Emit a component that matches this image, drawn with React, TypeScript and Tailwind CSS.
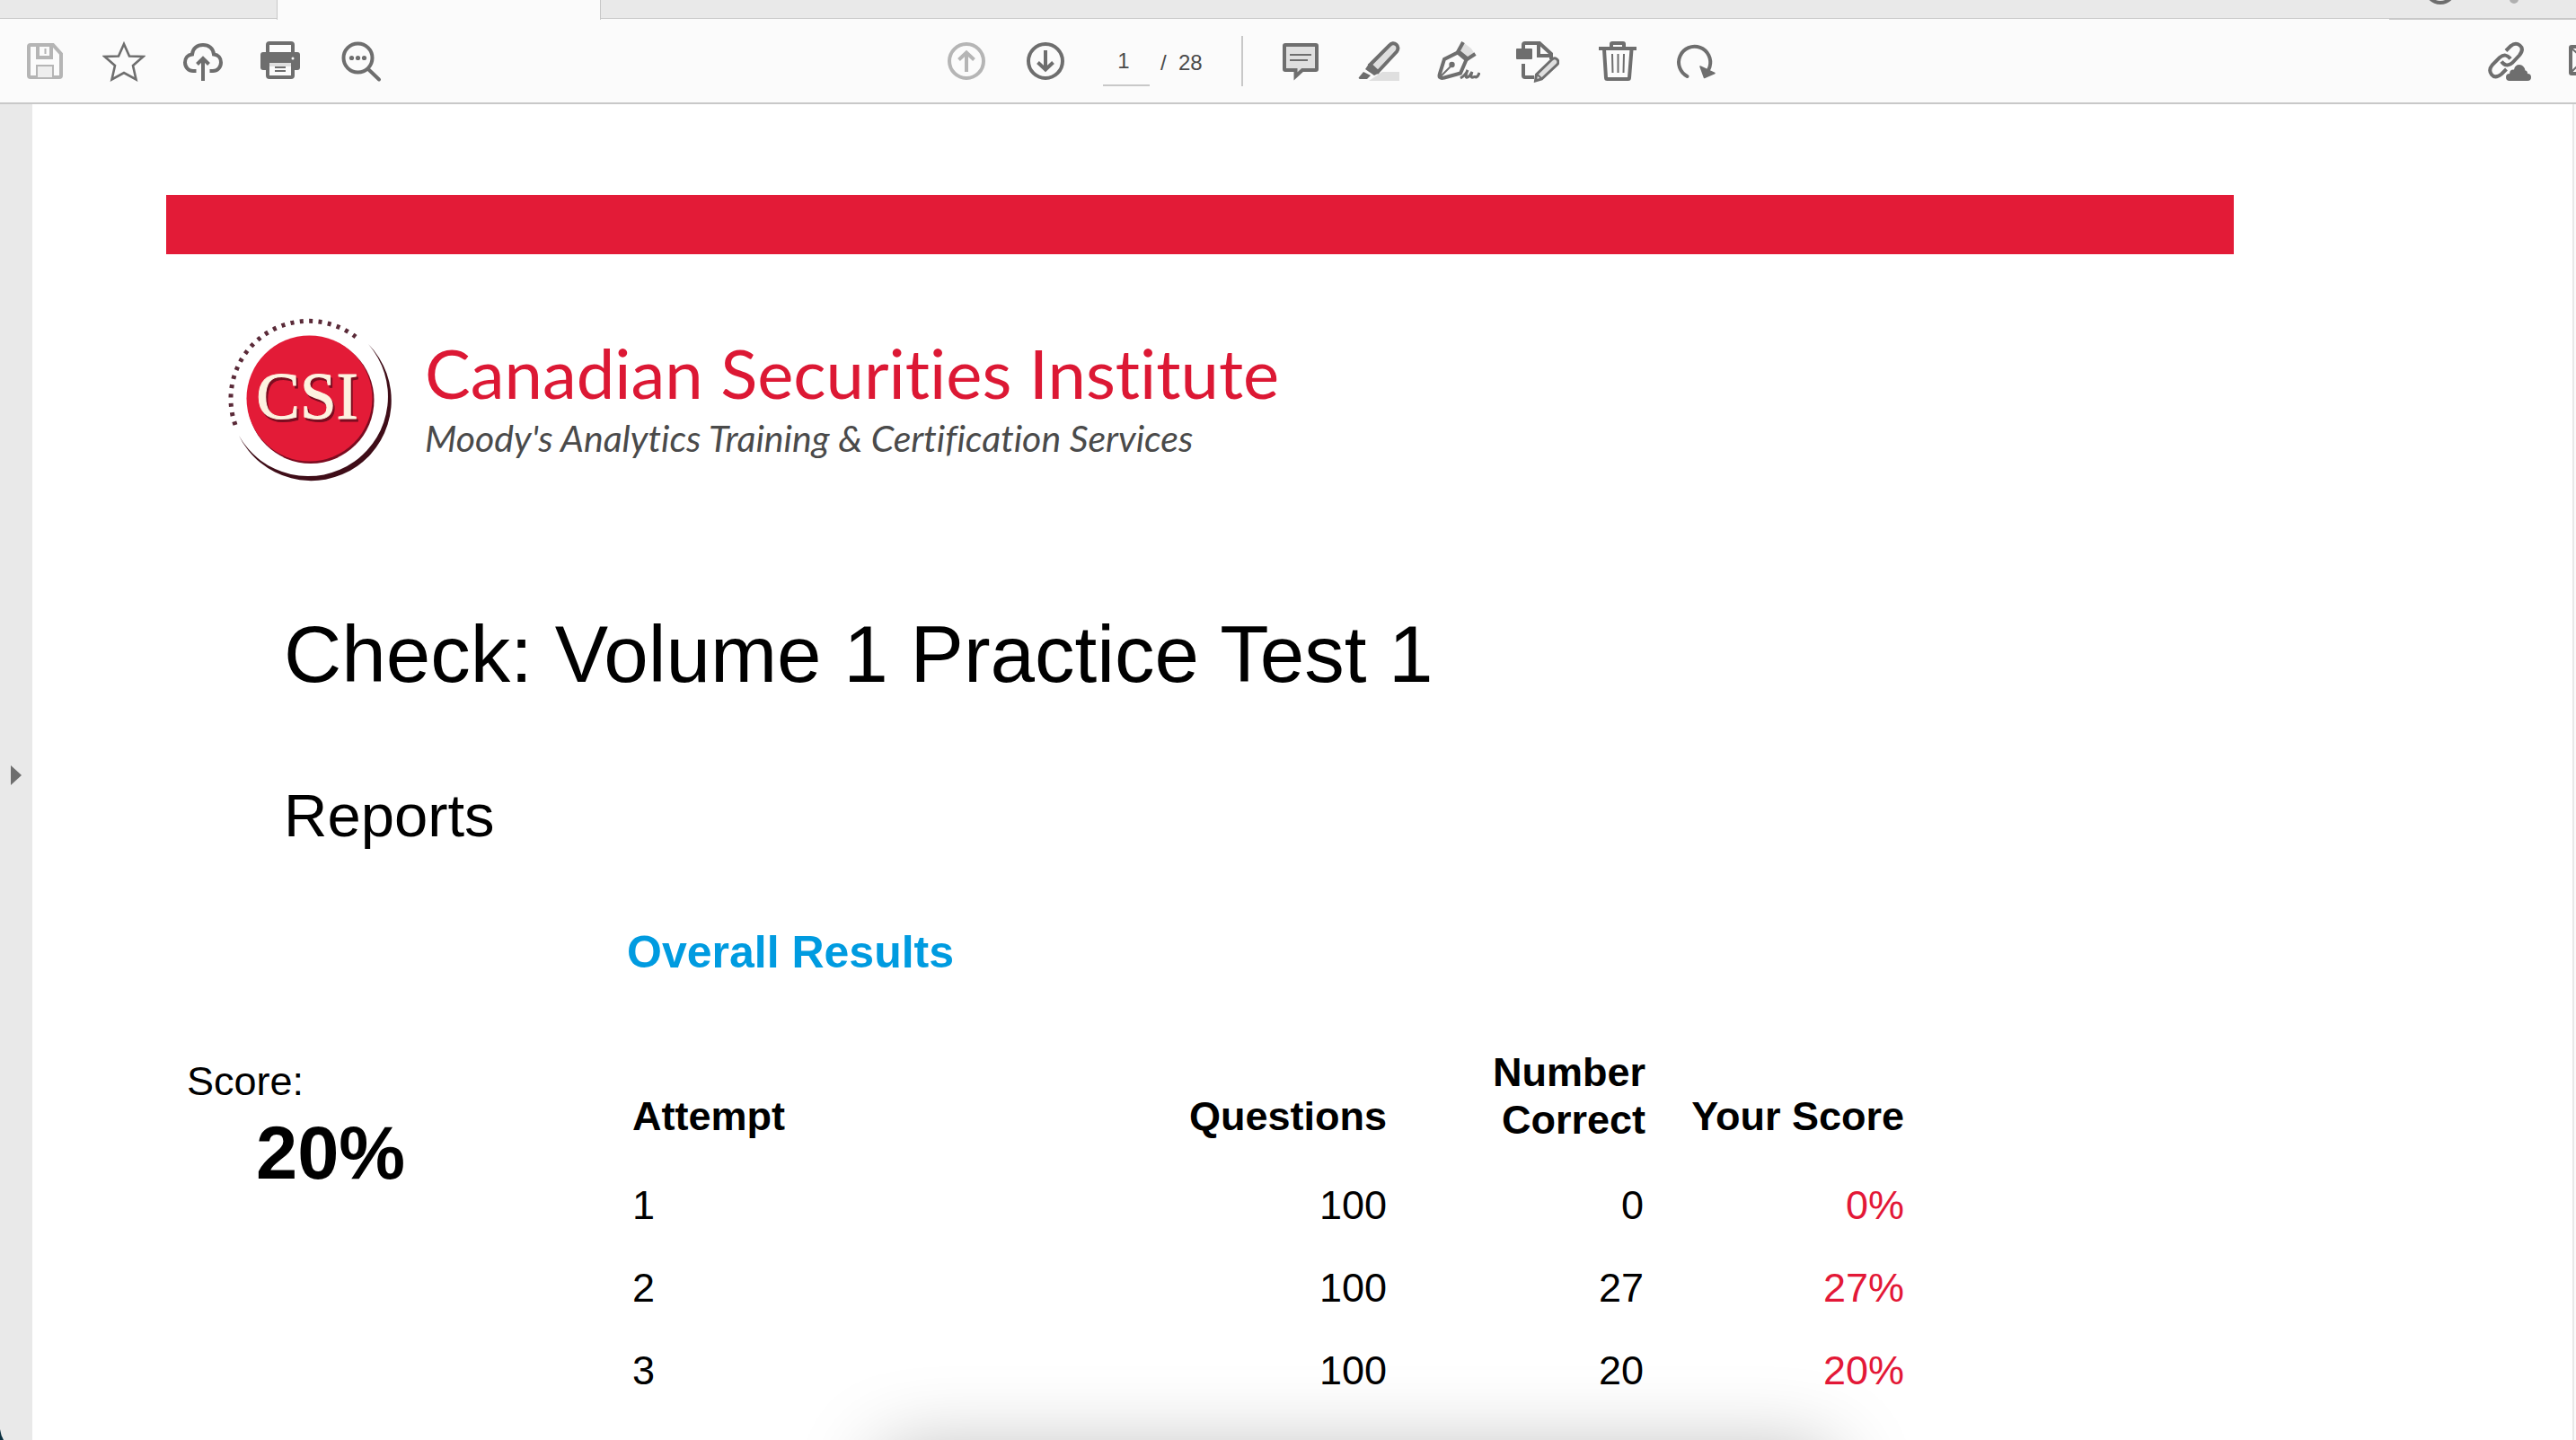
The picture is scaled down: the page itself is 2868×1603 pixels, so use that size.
import type { ReactNode } from "react";

const attempts = [
  { attempt: 1, questions: 100, correct: 0, score: "0%" },
  { attempt: 2, questions: 100, correct: 27, score: "27%" },
  { attempt: 3, questions: 100, correct: 20, score: "20%" },
];

function ToolButton({ label, muted, children }: { label: string; muted?: boolean; children: ReactNode }) {
  return (
    <button type="button" aria-label={label} className={muted ? "shrink-0 text-[#b5b5b5]" : "shrink-0 text-[#6e6e6e]"}>
      <svg viewBox="0 0 48 48" className="size-12" fill="none" stroke="currentColor" strokeWidth="4">
        {children}
      </svg>
    </button>
  );
}

function TabStrip() {
  return (
    <div className="flex h-[22px] bg-[#fbfbfb]">
      <div className="h-[21px] w-[308px] border-b border-[#c8c8c8] bg-[#e9e9e9]" />
      <div className="h-[22px] w-[361px] border-x border-[#c8c8c8] bg-[#fbfbfb]" />
      <div className="flex h-[21px] flex-1 items-start justify-end border-b border-[#c8c8c8] bg-[#e9e9e9]">
        <svg viewBox="0 0 208 22" className="h-[22px] w-[208px]" fill="none">
          <circle cx="57" cy="-13" r="16" stroke="#6e6e6e" strokeWidth="4" />
          <circle cx="139" cy="-1" r="5" fill="#b0b0b0" />
          <path d="M0 21h208" stroke="#c8c8c8" strokeWidth="2" />
        </svg>
      </div>
    </div>
  );
}

function Toolbar() {
  return (
    <div className="flex h-[94px] items-center overflow-hidden border-b-2 border-[#c8c8c8] bg-[#fbfbfb]">
      <div className="flex w-[1052px] shrink-0 gap-10 pl-[26px]">
        <ToolButton label="Save" muted>
          <path d="M8 6h25l9 10v24a2 2 0 0 1-2 2H8a2 2 0 0 1-2-2V8a2 2 0 0 1 2-2z" />
          <path d="M16 6v14h15V6" />
          <path d="M24.500 10v6" strokeWidth="2" />
          <path d="M15 42V29h18v13" strokeWidth="2" fill="#eeeeee" />
        </ToolButton>
        <ToolButton label="Add to favourites">
          <path d="M24 5l6 13.500 15.500.5-11.500 10 3.500 15.500L24 37l-13.500 7.500L14 29 2.500 19l15.500-.5z" strokeWidth="2.600" />
        </ToolButton>
        <ToolButton label="Upload to cloud">
          <path d="M16.500 35H13C8 35 4 31 4 25.500c0-5 3-8.500 8-9C12.500 10 17.500 6 24 6s11.500 4 12 10.500c5 .5 8 4 8 9C44 31 40 35 35 35h-3.500" />
          <path d="M24 46V21M17.500 27.500l6.500-6.500 6.500 6.500" />
        </ToolButton>
        <ToolButton label="Print">
          <path d="M8 16V6a2 2 0 0 1 2-2h24a2 2 0 0 1 2 2v10" />
          <path d="M3 14h38a3 3 0 0 1 3 3v14a3 3 0 0 1-3 3H3a3 3 0 0 1-3-3V17a3 3 0 0 1 3-3z" fill="currentColor" stroke="none" />
          <path d="M8 26h28v14a2 2 0 0 1-2 2H10a2 2 0 0 1-2-2z" fill="#fbfbfb" />
          <path d="M8 25h28" />
          <path d="M10 28h24" stroke="#dfdfdf" />
          <path d="M16 31h12M16 35h12" strokeWidth="2" />
          <circle cx="36" cy="21" r="1.500" fill="#fbfbfb" stroke="none" />
        </ToolButton>
        <ToolButton label="Search">
          <circle cx="20.500" cy="20.500" r="16" />
          <path d="M32 33l12 11.500" strokeLinecap="round" />
          <g fill="currentColor" stroke="none">
            <circle cx="13.500" cy="20.500" r="2.600" />
            <circle cx="20.500" cy="20.500" r="2.600" />
            <circle cx="27.500" cy="20.500" r="2.600" />
          </g>
        </ToolButton>
      </div>

      <div className="flex shrink-0 items-center gap-10">
        <ToolButton label="Previous page" muted>
          <circle cx="24" cy="24" r="19" />
          <path d="M24 36V14M15.500 22.500L24 14.500l8.500 8" />
        </ToolButton>
        <ToolButton label="Next page">
          <circle cx="24" cy="24" r="19" />
          <path d="M24 12v22M15.500 25.500l8.500 8 8.500-8" />
        </ToolButton>
        <div className="flex h-14 w-[156px] items-center gap-3 border-r-2 border-[#c8c8c8] text-2xl text-[#4b4b4b]">
          <input
            aria-label="Page number"
            defaultValue="1"
            className="h-14 w-[52px] border-b-2 border-[#c8c8c8] bg-transparent pt-0.5 pr-1.5 text-center"
          />
          <span className="pt-1">/&nbsp; 28</span>
        </div>
        <ToolButton label="Add comment">
          <path d="M7 6h34a1 1 0 0 1 1 1v26a1 1 0 0 1-1 1H26l-7.500 7v-7H7a1 1 0 0 1-1-1V7a1 1 0 0 1 1-1z" fill="#dfdfdf" />
          <path d="M12 17h24M12 23h20" strokeWidth="2" />
        </ToolButton>
        <ToolButton label="Highlight">
          <path d="M12 46l15-10h19v10z" fill="#dfdfdf" stroke="none" />
          <path d="M13.500 28L35 6.500C37 4 40 3.500 42.500 5.500S45 11 43 13.500L22 36z" fill="#dfdfdf" />
          <path d="M12 27l12 10-6 3-10-7z M6 36l8 4-4 4H2q-2-1-1-2z" fill="currentColor" stroke="none" />
        </ToolButton>
        <ToolButton label="Sign">
          <path d="M29 3l9 7 4.500 7-9 4L24 13z" fill="#dfdfdf" stroke="none" />
          <path d="M3 42q-1-1 0-4l5-16L23 14.500l9.500 8L26 37.500 8 42.500q-4 1-5-.5z" />
          <path d="M29 3l-5.500 10L34 21.500l8.500-5.500" />
          <path d="M3 42l12-12" strokeWidth="2" />
          <circle cx="16.500" cy="28" r="3.200" fill="currentColor" stroke="none" />
          <path d="M26 43c5-3 7-6 8-9-3 7-2 9 0 8 2-1 4-4 5-6-2 5-1 7 1 6 1 0 2-1 2-2 0 3 3 3 5-3" strokeWidth="3" />
        </ToolButton>
        <ToolButton label="Edit text and images">
          <path d="M8 12V6q0-2 2-2h16l13 12v6M25 4v14h14M8 27v13q0 2 2 2h10" />
          <rect y="10" width="18" height="12" rx="1" fill="currentColor" stroke="none" />
          <path d="M21.500 46l1-7L40 22q3-2.500 5.500 0t.5 5.500L28.500 44z" fill="#dfdfdf" strokeWidth="3" />
          <path d="M22.500 38l6 5.500" strokeWidth="2" />
        </ToolButton>
        <ToolButton label="Delete">
          <path d="M4 10h42M18 10V5q0-1 1-1h12q1 0 1 1v5M10 11l2 31.500q0 1.500 1.500 1.500h23q1.500 0 1.500-1.500L40.500 11" />
          <path d="M19 16l.5 21M25.500 16v21M32 16l-.5 21" strokeWidth="2" />
        </ToolButton>
        <ToolButton label="Rotate clockwise">
          <path d="M14.500 41A17.600 17.600 0 1 1 39.500 30.500L38 34" strokeLinecap="round" />
          <path d="M29 30l16 7.500-11.500 5z" fill="currentColor" strokeWidth="1.500" strokeLinejoin="round" />
        </ToolButton>
      </div>

      <div className="-mr-[38px] ml-auto flex shrink-0 gap-10">
        <ToolButton label="Share link">
          <path d="M20 12.500l5-5q5.500-5 10.500-1t-.5 11L27 26q-7 5.500-12-1.500" />
          <path d="M25 21.500q-5-7-12-1.500l-8 8q-5 6-1 11t11-.5l5.500-5.500" />
          <path d="M24 46a4 4 0 0 1 0-8q0-5 5-4.500 1-5.500 6-5.500t6.500 6.500q2.500 0 2.500 3.500 4 0 4 4t-4 4z" fill="currentColor" stroke="none" />
        </ToolButton>
        <ToolButton label="Send by email">
          <rect x="4" y="8" width="40" height="30" rx="1" />
          <path d="M4 9l20 17L44 9M4 37l13-13M44 37L31 24" strokeWidth="2" />
        </ToolButton>
      </div>
    </div>
  );
}

function CsiLogo() {
  return (
    <svg viewBox="0 0 196 196" className="size-[196px] shrink-0" role="img" aria-label="CSI">
      <path
        d="M16 125A86.600 86.600 0 0 1 150 27"
        fill="none"
        stroke="#5a2a38"
        strokeWidth="5"
        strokeDasharray="4 6.380"
      />
      <path d="M164 35A89.400 89.400 0 1 1 20 137A88.700 88.700 0 1 0 164 35z" fill="#3f0d18" />
      <circle cx="100" cy="97.500" r="70.500" fill="#7c0c20" />
      <circle cx="98.500" cy="95.500" r="70" fill="#e31b37" />
      <text
        x="96"
        y="118"
        textAnchor="middle"
        fill="#fdf3e0"
        stroke="#fdf3e0"
        className="font-['Liberation_Serif',serif] text-[73px] drop-shadow-[2px_3px_0_#7c0c20]"
      >
        CSI
      </text>
    </svg>
  );
}

function Results() {
  return (
    <table className="mt-[77px] ml-1.5 w-[1416px] table-fixed text-right text-[45px]">
      <thead>
        <tr className="align-bottom leading-[60px]">
          <th className="pb-[23px] text-left">Attempt</th>
          <th className="pb-[23px]">Questions</th>
          <th className="w-[288px] pb-[23px] pl-20 leading-[53px]">Number Correct</th>
          <th className="w-[288px] pb-[23px]">Your Score</th>
        </tr>
      </thead>
      <tbody>
        {attempts.map((row) => (
          <tr key={row.attempt} className="h-[92px]">
            <td className="text-left">{row.attempt}</td>
            <td>{row.questions}</td>
            <td className="pr-0.5">{row.correct}</td>
            <td className="text-[#e31837]">{row.score}</td>
          </tr>
        ))}
      </tbody>
    </table>
  );
}

export default function App() {
  return (
    <div className="relative flex h-screen flex-col overflow-hidden bg-white font-['Liberation_Sans',Arial,sans-serif] text-black">
      <TabStrip />
      <Toolbar />

      <div className="flex min-h-0 flex-1">
        <button
          type="button"
          aria-label="Open side panel"
          className="flex w-9 shrink-0 items-center justify-center bg-[#e9e9e9] pt-1.5"
        >
          <svg viewBox="0 0 12 22" className="h-[22px] w-3" fill="#6e6e6e">
            <path d="M0 0l12 11L0 22z" />
          </svg>
        </button>

        <main className="min-w-0 flex-1 overflow-hidden pt-[101px] pl-[149px]">
          <div className="mr-[377px] h-[66px] bg-[#e31b37]" />

          <div className="mt-[65px] flex gap-[31px] pl-[61px]">
            <CsiLogo />
            <div className="pt-[27px] font-['Lato',sans-serif] whitespace-nowrap [font-variant-ligatures:none]">
              <p className="text-[76px] leading-[80px] text-[#dc1834]">Canadian Securities Institute</p>
              <p className="mt-[9px] text-[41px] leading-[48px] text-[#4a4a4a] italic">
                Moody's Analytics Training &amp; Certification Services
              </p>
            </div>
          </div>

          <h1 className="mt-[134px] pl-[131px] text-[89px] leading-[100px]">Check: Volume 1 Practice Test 1</h1>
          <h2 className="mt-[90px] pl-[131px] text-[67px] leading-[80px]">Reports</h2>

          <div className="mt-[82px] flex pl-[23px]">
            <div className="w-[490px] shrink-0 pt-36">
              <p className="text-[45px] leading-[60px]">Score:</p>
              <p className="pl-[77px] text-[83px] leading-[100px] font-bold">20%</p>
            </div>
            <section>
              <h3 className="text-[50px] leading-[60px] font-bold text-[#009be0]">Overall Results</h3>
              <Results />
            </section>
          </div>
        </main>

        <div className="w-1 shrink-0 border-l-2 border-[#e8e8e8] bg-[#fbfbfb]" />
      </div>

      {/* shadow of the floating controls docked under the page */}
      <div className="pointer-events-none absolute -bottom-[112px] left-[980px] h-[100px] w-[1060px] rounded-2xl shadow-[0_0_90px_rgba(0,0,0,0.28)]" />
      <svg viewBox="0 0 4 12" className="absolute bottom-0 left-0 h-3 w-1" fill="#0b3040">
        <path d="M0 0q1 7 4 12H0z" />
      </svg>
    </div>
  );
}
